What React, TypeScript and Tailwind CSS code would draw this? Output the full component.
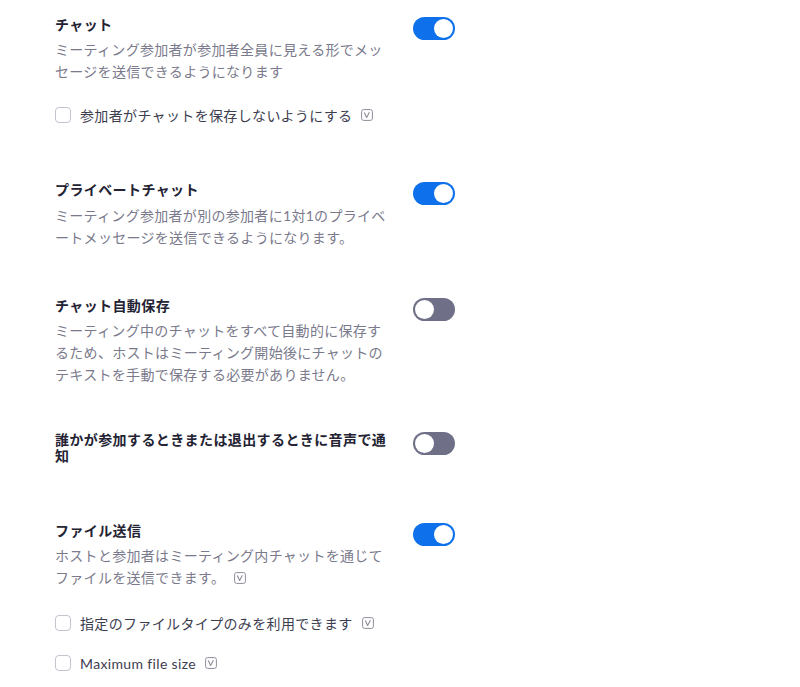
import type { ReactNode } from "react";

const font = { fontFamily: '"Lato", "Noto Sans CJK JP", sans-serif' };

function Toggle({ on }: { on: boolean }) {
  return (
    <div
      className={
        on
          ? "flex h-[23px] w-[42px] shrink-0 items-center justify-end rounded-full bg-[#0e71eb] p-[2px]"
          : "flex h-[23px] w-[42px] shrink-0 items-center justify-start rounded-full bg-[#6f6f87] p-[2px]"
      }
    >
      <span className="h-[19px] w-[19px] rounded-full bg-white" />
    </div>
  );
}

function InfoIcon() {
  return (
    <svg width="12" height="12" viewBox="0 0 12 12" className="ml-[9px] inline-block shrink-0 align-[-1px]">
      <rect x="0.6" y="0.6" width="10.8" height="10.8" rx="2" fill="none" stroke="#8d8d9c" strokeWidth="1" />
      <path d="M3.3 3.6 L5.6 8.4 L8.4 3.3" fill="none" stroke="#8d8d9c" strokeWidth="1.1" strokeLinejoin="round" />
    </svg>
  );
}

function CheckRow({ children, className }: { children: ReactNode; className: string }) {
  return (
    <div className={"flex h-[20px] items-center " + className}>
      <span className="h-[16px] w-[16px] shrink-0 rounded-[4px] border border-[#c3c3ce] bg-white" />
      <span className="ml-[9px] whitespace-nowrap text-[14px] tracking-[0.35px] text-[#3d3d50]">{children}</span>
      <InfoIcon />
    </div>
  );
}

function Section({
  title,
  on,
  className,
  children,
}: {
  title: ReactNode;
  on: boolean;
  className: string;
  children?: ReactNode;
}) {
  return (
    <section className={"flex items-start gap-[22px] " + className}>
      <div className="w-[336px]">
        <h3 className="text-[14px] font-bold leading-[16px] tracking-[0.4px] text-[#232333]">{title}</h3>
        {children}
      </div>
      <Toggle on={on} />
    </section>
  );
}

function Desc({ children, className = "mt-[6px]" }: { children: ReactNode; className?: string }) {
  return (
    <p className={"whitespace-nowrap text-[14px] leading-[22px] tracking-[0.3px] text-[#7a7a8c] " + className}>
      {children}
    </p>
  );
}

export default function App() {
  return (
    <div className="h-[687px] w-[800px] overflow-hidden bg-white pl-[55px]" style={font}>
      <Section title="チャット" on className="pt-[17px]">
        <Desc>
          ミーティング参加者が参加者全員に見える形でメッ
          <br />
          セージを送信できるようになります
        </Desc>
        <CheckRow className="mt-[22px]">参加者がチャットを保存しないようにする</CheckRow>
      </Section>

      <Section title="プライベートチャット" on className="mt-[57px]">
        <Desc className="mt-[7px]">
          ミーティング参加者が別の参加者に1対1のプライベ
          <br />
          ートメッセージを送信できるようになります。
        </Desc>
      </Section>

      <Section title="チャット自動保存" on={false} className="mt-[49px]">
        <Desc>
          ミーティング中のチャットをすべて自動的に保存す
          <br />
          るため、ホストはミーティング開始後にチャットの
          <br />
          テキストを手動で保存する必要がありません。
        </Desc>
      </Section>

      <Section
        title={
          <>
            誰かが参加するときまたは退出するときに音声で通
            <br />知
          </>
        }
        on={false}
        className="mt-[46px]"
      >
        {null}
      </Section>

      <Section title="ファイル送信" on className="mt-[59px]">
        <Desc>
          ホストと参加者はミーティング内チャットを通じて
          <br />
          ファイルを送信できます。
          <InfoIcon />
        </Desc>
        <CheckRow className="mt-[24px]">指定のファイルタイプのみを利用できます</CheckRow>
        <CheckRow className="mt-[20px]">Maximum file size</CheckRow>
      </Section>
    </div>
  );
}
